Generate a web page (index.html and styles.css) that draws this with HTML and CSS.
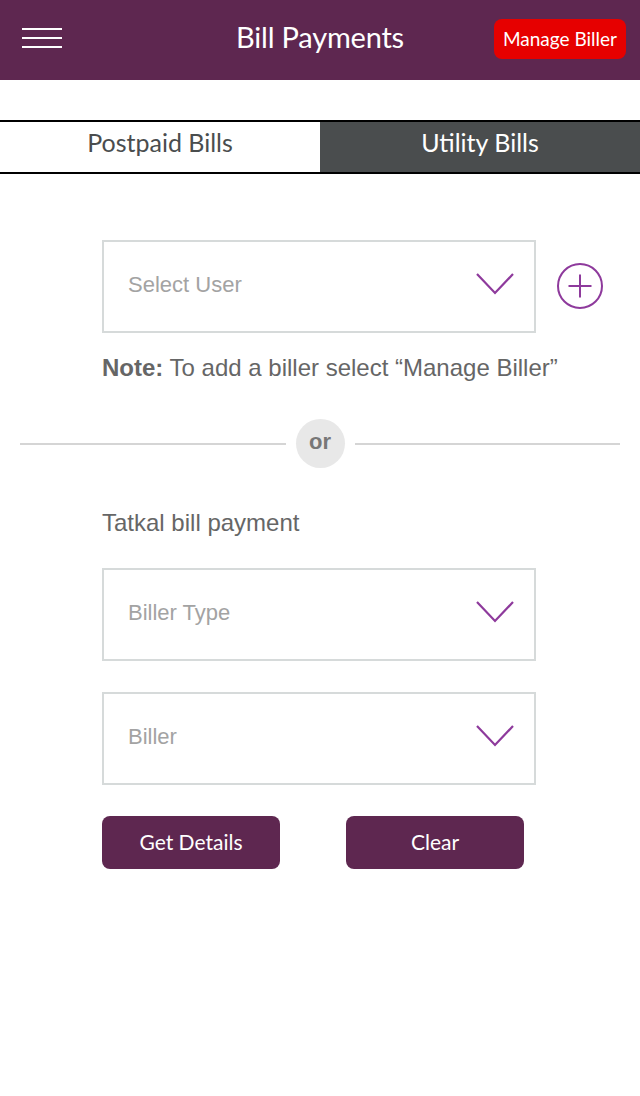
FILE: index.html
```html
<!DOCTYPE html>
<html lang="en">
<head>
    <meta charset="UTF-8">
    <meta name="viewport" content="width=device-width, initial-scale=1.0">
    <title>Bill Payments</title>
    <link rel="stylesheet" href="styles.css">
</head>
<body>
    <header class="topbar">
        <button class="menu-btn" aria-label="Menu">
            <span></span>
            <span></span>
            <span></span>
        </button>
        <h1>Bill Payments</h1>
        <button class="manage-btn">Manage Biller</button>
    </header>

    <nav class="tabs">
        <div class="tab">Postpaid Bills</div>
        <div class="tab active">Utility Bills</div>
    </nav>

    <main class="content">
        <div class="user-row">
            <div class="select-box">
                <span>Select User</span>
                <svg class="chevron" width="38" height="22" viewBox="0 0 38 22">
                    <polyline points="1,1 19,20 37,1" fill="none" stroke="#8e3a9c" stroke-width="2.2"/>
                </svg>
            </div>
            <button class="add-btn" aria-label="Add user">
                <svg width="48" height="48" viewBox="0 0 48 48">
                    <circle cx="24" cy="24" r="22" fill="none" stroke="#8e3a9c" stroke-width="2"/>
                    <line x1="12.5" y1="24" x2="35.5" y2="24" stroke="#8e3a9c" stroke-width="2"/>
                    <line x1="24" y1="12.5" x2="24" y2="35.5" stroke="#8e3a9c" stroke-width="2"/>
                </svg>
            </button>
        </div>

        <p class="note"><strong>Note:</strong> To add a biller select “Manage Biller”</p>

        <div class="divider">
            <span class="line"></span>
            <span class="or">or</span>
            <span class="line"></span>
        </div>

        <p class="section-label">Tatkal bill payment</p>

        <div class="select-box">
            <span>Biller Type</span>
            <svg class="chevron" width="38" height="22" viewBox="0 0 38 22">
                <polyline points="1,1 19,20 37,1" fill="none" stroke="#8e3a9c" stroke-width="2.2"/>
            </svg>
        </div>

        <div class="select-box">
            <span>Biller</span>
            <svg class="chevron" width="38" height="22" viewBox="0 0 38 22">
                <polyline points="1,1 19,20 37,1" fill="none" stroke="#8e3a9c" stroke-width="2.2"/>
            </svg>
        </div>

        <div class="actions">
            <button class="action-btn">Get Details</button>
            <button class="action-btn">Clear</button>
        </div>
    </main>
</body>
</html>
```

FILE: styles.css
```css
body {
    margin: 0;
    padding: 0;
    background-color: #fff;
    font-family: "Liberation Sans", Arial, sans-serif;
}

button {
    font-family: inherit;
    border: none;
    cursor: pointer;
}

/* top bar */
.topbar {
    height: 80px;
    background-color: #5e2750;
    display: grid;
    grid-template-columns: 1fr auto 1fr;
    align-items: center;
    padding: 0 14px 0 22px;
    box-sizing: border-box;
}

.menu-btn {
    width: 40px;
    height: 20px;
    padding: 0;
    background: none;
    display: flex;
    flex-direction: column;
    justify-content: space-between;
    margin-top: -4px;
}

.menu-btn span {
    display: block;
    height: 2px;
    background-color: #fff;
}

.topbar h1 {
    margin: -7px 0 0 -8px;
    font-family: Lato, sans-serif;
    font-weight: normal;
    font-size: 29px;
    color: #fff;
    letter-spacing: -0.2px;
}

.manage-btn {
    justify-self: end;
    background-color: #e60000;
    color: #fff;
    font-family: Lato, sans-serif;
    font-size: 19px;
    height: 40px;
    padding: 0 9px 2px;
    border-radius: 8px;
    margin-top: -2px;
}

/* tabs */
.tabs {
    display: flex;
    margin-top: 40px;
    border-top: 2px solid #000;
    border-bottom: 2px solid #000;
}

.tab {
    flex: 1;
    height: 50px;
    box-sizing: border-box;
    padding-bottom: 10px;
    display: flex;
    align-items: center;
    justify-content: center;
    font-family: Lato, sans-serif;
    font-size: 25px;
    color: #4a4d4e;
}

.tab.active {
    background-color: #4a4d4e;
    color: #fff;
}

/* form */
.content {
    padding: 66px 20px 0;
}

.user-row {
    display: flex;
    align-items: center;
    gap: 20px;
    padding-left: 82px;
}

.select-box {
    width: 434px;
    height: 93px;
    box-sizing: border-box;
    border: 2px solid #d6dada;
    display: flex;
    align-items: center;
    justify-content: space-between;
    padding: 0 20px 3px 24px;
    font-size: 22px;
    color: #a3a3a3;
    margin-left: 82px;
}

.user-row .select-box {
    margin-left: 0;
}

.select-box .chevron {
    margin-top: -2px;
}

.add-btn {
    background: none;
    padding: 0;
    width: 48px;
    height: 48px;
    margin-top: -2px;
}

.note {
    margin: 21px 0 0 82px;
    font-size: 24px;
    color: #666;
}

.divider {
    display: flex;
    align-items: center;
    gap: 10px;
    margin-top: 37px;
}

.divider .line {
    flex: 1;
    height: 2px;
    background-color: #d5d5d5;
}

.divider .or {
    width: 49px;
    height: 49px;
    border-radius: 50%;
    background-color: #e8e8e8;
    color: #777;
    font-weight: bold;
    font-size: 22px;
    display: flex;
    align-items: center;
    justify-content: center;
    padding-bottom: 3px;
    box-sizing: border-box;
}

.section-label {
    margin: 41px 0 31px 82px;
    font-size: 24px;
    color: #666;
}

.select-box + .select-box {
    margin-top: 31px;
}

.actions {
    display: flex;
    gap: 66px;
    margin: 31px 0 0 82px;
}

.action-btn {
    width: 178px;
    height: 53px;
    padding-bottom: 4px;
    border-radius: 8px;
    background-color: #5e2750;
    color: #fff;
    font-family: Lato, sans-serif;
    font-size: 21px;
}
```
